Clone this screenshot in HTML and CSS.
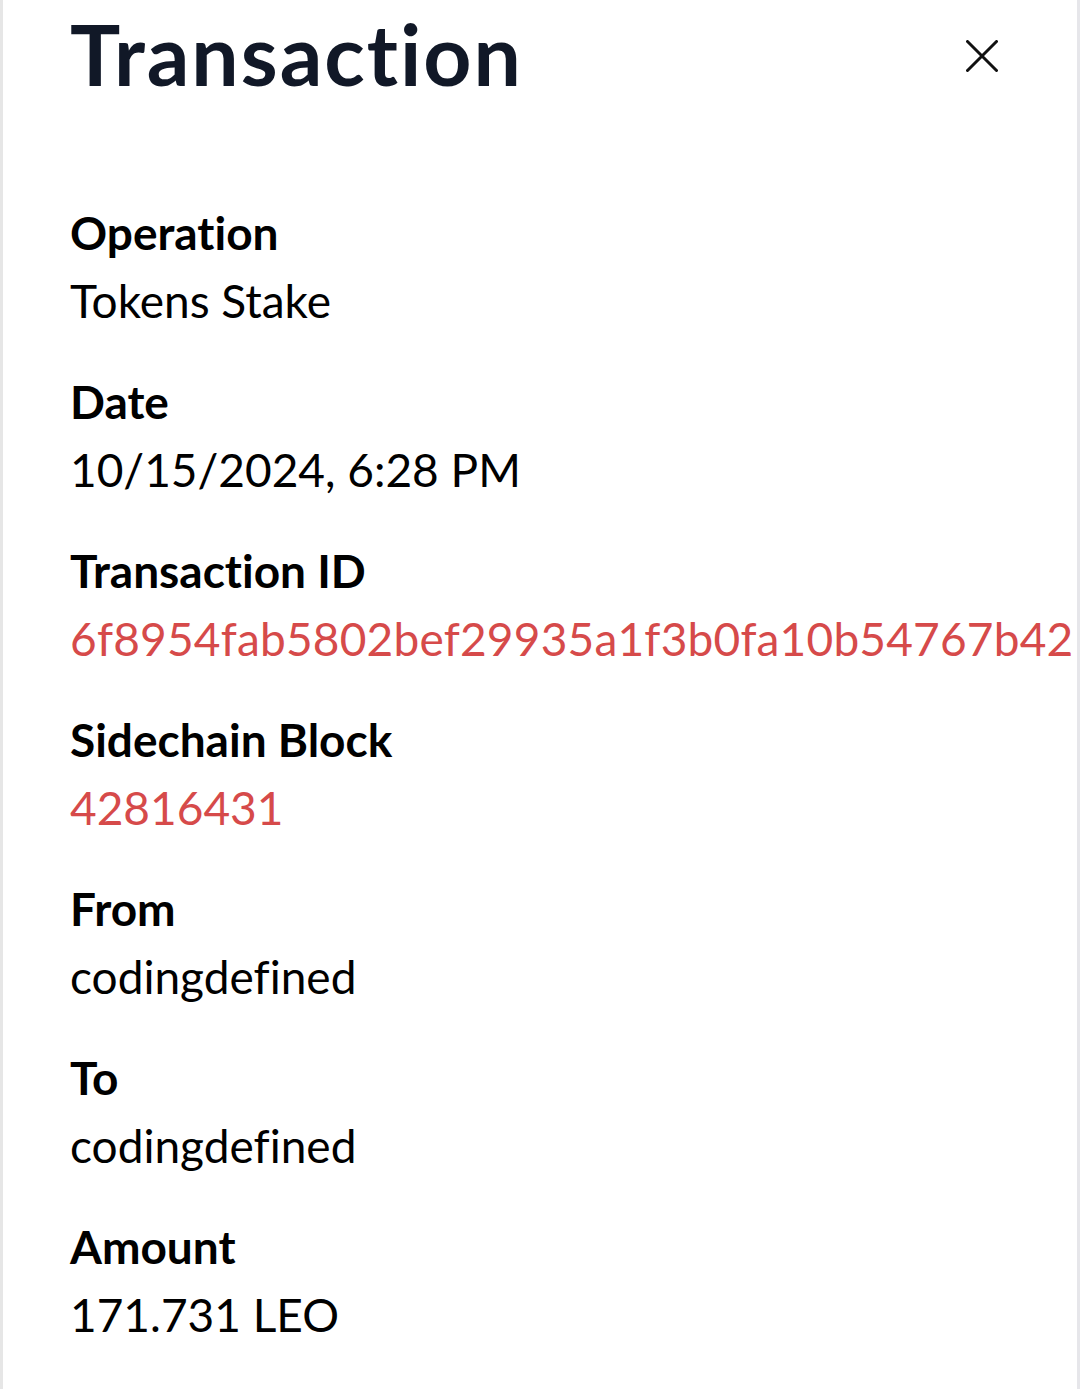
FILE: index.html
```html
<!DOCTYPE html>
<html>
<head>
<meta charset="utf-8">
<link rel="stylesheet" href="styles.css">
</head>
<body>
<div class="panel">
  <header class="head">
    <h1 class="title">Transaction</h1>
    <button class="close" aria-label="Close">
      <svg width="32" height="32" viewBox="0 0 32 32"><path d="M1.5 1.5 L30.5 30.5 M30.5 1.5 L1.5 30.5" stroke="#111" stroke-width="3" stroke-linecap="round" fill="none"/></svg>
    </button>
  </header>
  <dl class="fields">
    <div class="field"><dt>Operation</dt><dd>Tokens Stake</dd></div>
    <div class="field"><dt>Date</dt><dd>10/15/2024, 6:28 PM</dd></div>
    <div class="field"><dt>Transaction ID</dt><dd class="link txid">6f8954fab5802bef29935a1f3b0fa10b54767b42</dd></div>
    <div class="field"><dt>Sidechain Block</dt><dd class="link">42816431</dd></div>
    <div class="field"><dt>From</dt><dd>codingdefined</dd></div>
    <div class="field"><dt>To</dt><dd>codingdefined</dd></div>
    <div class="field"><dt>Amount</dt><dd>171.731 LEO</dd></div>
  </dl>
</div>
</body>
</html>
```
FILE: styles.css
```css
html, body { margin: 0; padding: 0; background: #fff; }
body { font-family: "Lato", "Noto Sans", sans-serif; font-variant-ligatures: none; }
.panel {
  width: 1080px;
  height: 1389px;
  box-sizing: border-box;
  border-left: 3px solid #e6e6e6;
  border-right: 3px solid #e6e6ea;
  padding: 0 79px 0 67px;
  overflow: hidden;
}
.head {
  display: flex;
  align-items: center;
  justify-content: space-between;
  height: 112px;
}
.title {
  margin: -4px 0 0 0;
  font-size: 84px;
  font-weight: 700;
  color: #111827;
  line-height: 1;
  letter-spacing: 2px;
}
.close {
  border: 0; background: none; padding: 0; width: 32px; height: 32px;
  display: flex;
}
.fields { margin: 93px 0 0 0; display: flex; flex-direction: column; gap: 45px; }
.field { display: flex; flex-direction: column; gap: 12px; }
dt { font-size: 46px; font-weight: 700; color: #000; line-height: 56px; }
dd { margin: 0; font-size: 46px; font-weight: 400; color: #000; line-height: 56px; white-space: nowrap; }
.link { color: #d64a4a; }
.txid { letter-spacing: 0.2px; }
```
